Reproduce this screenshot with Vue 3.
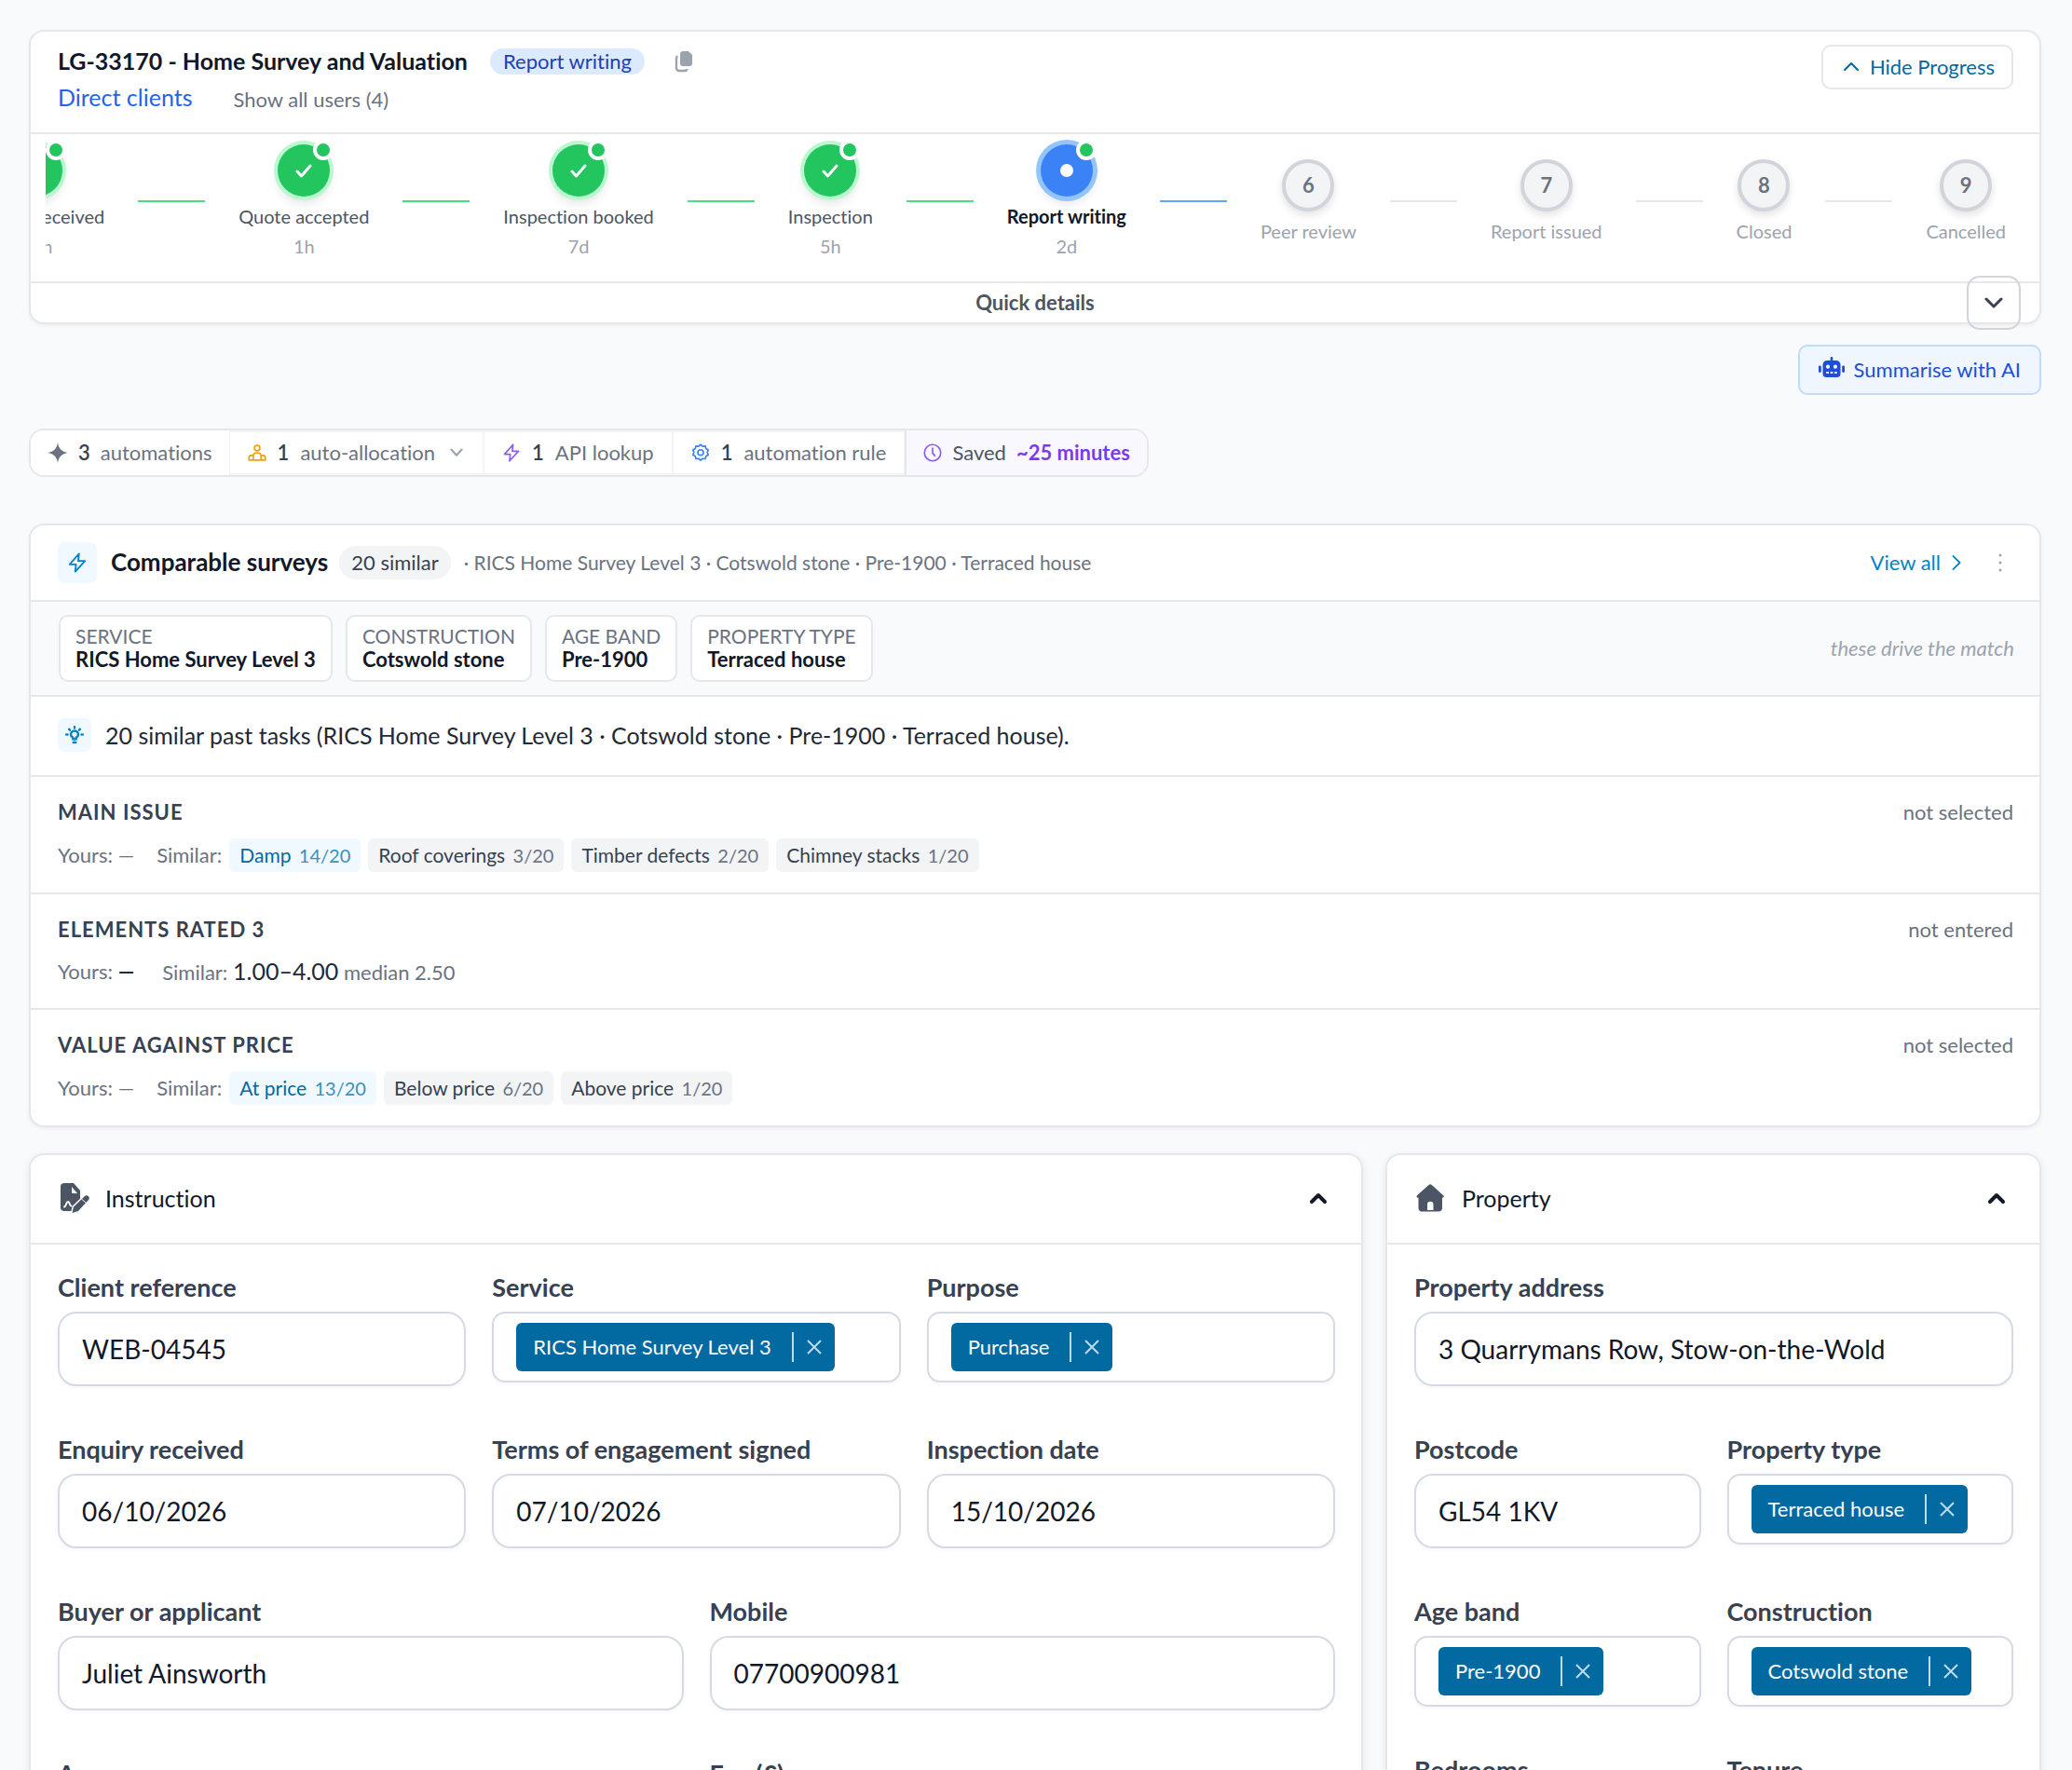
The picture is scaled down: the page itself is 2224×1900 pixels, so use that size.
<script setup>
import { computed, ref } from "vue"

const showProgress = ref(true)

const StepState = Object.freeze({
  Done: "done",
  Current: "current",
  Pending: "pending",
})

const steps = [
  { no: 1, title: "Enquiry received", time: "12h", state: StepState.Done },
  { no: 2, title: "Quote accepted", time: "1h", state: StepState.Done },
  { no: 3, title: "Inspection booked", time: "7d", state: StepState.Done },
  { no: 4, title: "Inspection", time: "5h", state: StepState.Done },
  { no: 5, title: "Report writing", time: "2d", state: StepState.Current },
  { no: 6, title: "Peer review", state: StepState.Pending },
  { no: 7, title: "Report issued", state: StepState.Pending },
  { no: 8, title: "Closed", state: StepState.Pending },
  { no: 9, title: "Cancelled", state: StepState.Pending },
]

const drivers = [
  { label: "Service", value: "RICS Home Survey Level 3" },
  { label: "Construction", value: "Cotswold stone" },
  { label: "Age band", value: "Pre-1900" },
  { label: "Property type", value: "Terraced house" },
]

const matchText = computed(() => drivers.map((d) => d.value).join(" · "))

const mainIssue = [
  { name: "Damp", count: 14 },
  { name: "Roof coverings", count: 3 },
  { name: "Timber defects", count: 2 },
  { name: "Chimney stacks", count: 1 },
]

const valueAgainstPrice = [
  { name: "At price", count: 13 },
  { name: "Below price", count: 6 },
  { name: "Above price", count: 1 },
]

// span = columns out of 6
const panels = ref([
  {
    key: "instruction",
    title: "Instruction",
    fields: [
      { id: "client-ref", label: "Client reference", value: "WEB-04545", span: 2 },
      { id: "service", label: "Service", tag: "RICS Home Survey Level 3", span: 2 },
      { id: "purpose", label: "Purpose", tag: "Purchase", span: 2 },
      { id: "enquiry", label: "Enquiry received", value: "06/10/2026", span: 2 },
      { id: "terms", label: "Terms of engagement signed", value: "07/10/2026", span: 2 },
      { id: "inspection", label: "Inspection date", value: "15/10/2026", span: 2 },
      { id: "buyer", label: "Buyer or applicant", value: "Juliet Ainsworth", span: 3 },
      { id: "mobile", label: "Mobile", value: "07700900981", span: 3 },
      { id: "access", label: "Access", value: "", span: 3 },
      { id: "fee", label: "Fee (£)", value: "", span: 3 },
    ],
  },
  {
    key: "property",
    title: "Property",
    fields: [
      { id: "address", label: "Property address", value: "3 Quarrymans Row, Stow-on-the-Wold", span: 6 },
      { id: "postcode", label: "Postcode", value: "GL54 1KV", span: 3 },
      { id: "ptype", label: "Property type", tag: "Terraced house", span: 3 },
      { id: "age", label: "Age band", tag: "Pre-1900", span: 3 },
      { id: "construction", label: "Construction", tag: "Cotswold stone", span: 3 },
      { id: "bedrooms", label: "Bedrooms", value: "", span: 3 },
      { id: "tenure", label: "Tenure", value: "", span: 3 },
    ],
  },
])
</script>

<template>
  <main class="page">
    <!-- Task header -->
    <section class="card">
      <header class="task-head">
        <div class="task-info">
          <div class="task-row">
            <h1 class="task-title">LG-33170 - Home Survey and Valuation</h1>
            <span class="status">Report writing</span>
            <button type="button" class="plain copy" aria-label="Copy">
              <svg viewBox="0 0 20 24"><path d="M9 1h6l4 4v9a3 3 0 0 1-3 3H9a3 3 0 0 1-3-3V4a3 3 0 0 1 3-3Z" fill="#9ca3af" /><path d="M3.500 6.500A2 2 0 0 0 2 8.500V19a3 3 0 0 0 3 3h6a2.500 2.500 0 0 0 2.500-2" fill="none" stroke="#9ca3af" stroke-width="2.400" /></svg>
            </button>
          </div>
          <div class="task-row links">
            <a href="#" class="client">Direct clients</a>
            <button type="button" class="plain users">Show all users (4)</button>
          </div>
        </div>
        <button type="button" class="hide-btn" @click="showProgress = !showProgress">
          <svg viewBox="0 0 20 20" class="chev"><path d="M3 13l7-7 7 7" /></svg>
          Hide Progress
        </button>
      </header>

      <div v-if="showProgress" class="steps">
        <template v-for="(s, i) in steps" :key="s.no">
          <div class="step" :class="s.state">
            <div class="bubble">
              <svg v-if="s.state === StepState.Done" viewBox="0 0 24 24"><path d="M5 13l4.500 5L19 7" /></svg>
              <span v-else-if="s.state === StepState.Current" class="dot"></span>
              <template v-else>{{ s.no }}</template>
              <span v-if="s.state !== StepState.Pending" class="ping"></span>
            </div>
            <div class="step-title">{{ s.title }}</div>
            <div v-if="s.time" class="step-time">{{ s.time }}</div>
          </div>
          <span v-if="i < steps.length - 1" class="line" :class="s.state"></span>
        </template>
      </div>

      <div class="quick">
        Quick details
        <button type="button" class="quick-btn" aria-label="Expand quick details">
          <svg viewBox="0 0 20 20" class="chev"><path d="M2 6l8 8 8-8" /></svg>
        </button>
      </div>
    </section>

    <div class="ai-row">
      <button type="button" class="ai-btn">
        <svg viewBox="0 0 28 24" class="robot">
          <path fill="currentColor" fill-rule="evenodd" d="M12.700 1.300a1.300 1.300 0 0 1 2.600 0V4H19a4.500 4.500 0 0 1 4.500 4.500V18a4 4 0 0 1-4 4h-11a4 4 0 0 1-4-4V8.500A4.500 4.500 0 0 1 9 4h3.700ZM10 8.600a2.100 2.100 0 1 0 0 4.200 2.100 2.100 0 0 0 0-4.200Zm8 0a2.100 2.100 0 1 0 0 4.200 2.100 2.100 0 0 0 0-4.200ZM8.200 16v2H11v-2Zm4.400 0v2h2.800v-2Zm4.400 0v2h2.800v-2ZM1.400 9.500c.8 0 1.400.5 1.400 1.200v5c0 .7-.6 1.200-1.400 1.200S0 16.400 0 15.700v-5c0-.7.6-1.200 1.400-1.200Zm25.200 0c.8 0 1.400.5 1.400 1.200v5c0 .7-.6 1.200-1.400 1.200s-1.400-.5-1.400-1.200v-5c0-.7.6-1.200 1.400-1.200Z" />
        </svg>
        Summarise with AI
      </button>
    </div>

    <!-- Automation summary -->
    <div class="auto-bar">
      <div class="auto-item first">
        <svg viewBox="0 0 24 24" class="ico star"><path d="M12 0c1 7 4.500 11 12 12-7.500 1-11 5-12 12-1-7-4.500-11-12-12C7.500 11 11 7 12 0Z" /></svg>
        <b>3</b><span>automations</span>
      </div>
      <button type="button" class="auto-item">
        <svg viewBox="0 0 24 24" class="ico amber"><circle cx="12" cy="6" r="3.500" /><path d="M7 21.500v-5.500c0-2.500 2-4 5-4s5 1.500 5 4v5.500M7 15.500H4.500c-2 0-3 1-3 3v3h21v-3c0-2-1-3-3-3H17" /></svg>
        <b>1</b><span>auto-allocation</span>
        <svg viewBox="0 0 20 20" class="chev mini"><path d="M2 5l8 9 8-9" /></svg>
      </button>
      <button type="button" class="auto-item">
        <svg viewBox="0 0 24 24" class="ico violet"><path d="M14 1.500 3 14h7.500L9.500 22.500 21 10h-8Z" /></svg>
        <b>1</b><span>API lookup</span>
      </button>
      <button type="button" class="auto-item">
        <svg viewBox="0 0 24 24" class="ico blue"><path d="M12 1.500l2.600 2.200 3.400-.3.900 3.300 3 1.700-1.300 3.100 1.300 3.200-3 1.700-.9 3.400-3.400-.3-2.600 2.200-2.600-2.200-3.400.3-.9-3.400-3-1.700 1.300-3.200-1.300-3.100 3-1.700.9-3.300 3.400.3Z" /><circle cx="12" cy="11.700" r="3.600" /></svg>
        <b>1</b><span>automation rule</span>
      </button>
      <div class="auto-item saved">
        <svg viewBox="0 0 24 24" class="ico violet"><circle cx="12" cy="12" r="10.500" /><path d="M12 6v6.500l3 3.500" /></svg>
        <span class="saved-text">Saved</span><strong>~25 minutes</strong>
      </div>
    </div>

    <!-- Comparable surveys -->
    <section class="card comparable">
      <header class="comp-head">
        <span class="icon-box">
          <svg viewBox="0 0 24 24" class="ico"><path d="M14 1.500 3 14h7.500L9.500 22.500 21 10h-8Z" /></svg>
        </span>
        <h2 class="comp-title">Comparable surveys</h2>
        <span class="pill">20 similar</span>
        <span class="comp-sub">· {{ matchText }}</span>
        <a href="#" class="view-all">View all
          <svg viewBox="0 0 20 20" class="chev"><path d="M6 2l8 8-8 8" /></svg>
        </a>
        <button type="button" class="plain more" aria-label="More options">
          <svg viewBox="0 0 8 24"><circle cx="4" cy="4" r="1.500" /><circle cx="4" cy="12" r="1.500" /><circle cx="4" cy="20" r="1.500" /></svg>
        </button>
      </header>

      <div class="drivers">
        <div v-for="d in drivers" :key="d.label" class="driver">
          <span class="driver-label">{{ d.label }}</span>
          <span class="driver-value">{{ d.value }}</span>
        </div>
        <em class="drivers-note">these drive the match</em>
      </div>

      <div class="hint">
        <span class="icon-box small">
          <svg viewBox="0 0 24 24" class="ico"><path d="M10 17.500v-2c-2-1-2.800-2.500-2.800-4a4.800 4.800 0 0 1 9.600 0c0 1.500-.8 3-2.800 4v2ZM10.500 21.500h3M12 1.500v1.500M1.500 11.500H3M21 11.500h1.500M5 4.500l1 1M19 4.500l-1 1" /></svg>
        </span>
        20 similar past tasks ({{ matchText }}).
      </div>

      <div class="metric">
        <div class="metric-head"><h3>Main issue</h3><span>not selected</span></div>
        <div class="metric-row">
          <span class="yours">Yours: —</span>
          <span>Similar:</span>
          <span v-for="(t, i) in mainIssue" :key="t.name" class="chip" :class="{ top: i === 0 }">
            {{ t.name }} <small>{{ t.count }}/20</small>
          </span>
        </div>
      </div>

      <div class="metric">
        <div class="metric-head"><h3>Elements rated 3</h3><span>not entered</span></div>
        <div class="metric-row numeric">
          <span class="yours">Yours: <b>—</b></span>
          <span>Similar: <span class="range">1.00–4.00</span> median 2.50</span>
        </div>
      </div>

      <div class="metric">
        <div class="metric-head"><h3>Value against price</h3><span>not selected</span></div>
        <div class="metric-row">
          <span class="yours">Yours: —</span>
          <span>Similar:</span>
          <span v-for="(t, i) in valueAgainstPrice" :key="t.name" class="chip" :class="{ top: i === 0 }">
            {{ t.name }} <small>{{ t.count }}/20</small>
          </span>
        </div>
      </div>
    </section>

    <!-- Form panels -->
    <div class="panels">
      <section v-for="p in panels" :key="p.key" class="card panel" :class="p.key">
        <header class="panel-head">
          <svg v-if="p.key === 'instruction'" viewBox="0 0 36 32" class="panel-icon">
            <path d="M7 0h10l7 8v20a2 2 0 0 1-2 2H7a4 4 0 0 1-4-4V4a4 4 0 0 1 4-4Z" />
            <path d="M15 4v7h6Z" class="cut" />
            <path d="M7 25.500c2 0 2-5.500 4-5.500s1.500 4.500 3.500 4.500" class="sign" />
            <path d="M29.500 13.500a3 3 0 0 1 4 4L22 30l-6.500 2 1.500-6.500Z" class="pen" />
            <path d="M25.500 17l5 4.500" class="pen-gap" />
          </svg>
          <svg v-else viewBox="0 0 36 32" class="panel-icon">
            <path fill-rule="evenodd" d="M15.500 2a2.500 2.500 0 0 1 3.300 0L31 13c1.500 1.500.8 2.700-1 2.700V26.500a4 4 0 0 1-4 4H8.500a4 4 0 0 1-4-4V15.700c-1.800 0-2.700-1.200-1.200-2.700ZM14 29h6.500v-6a3.200 3.200 0 0 0-6.500 0Z" />
          </svg>
          <h2>{{ p.title }}</h2>
          <button type="button" class="plain panel-toggle" :aria-label="`Collapse ${p.title}`">
            <svg viewBox="0 0 20 20" class="chev"><path d="M3 14l7-7 7 7" /></svg>
          </button>
        </header>
        <div class="fields">
          <div v-for="f in p.fields" :key="f.id" class="field" :class="`span-${f.span}`">
            <label :for="f.id">{{ f.label }}</label>
            <div v-if="f.tag !== undefined" class="tag-box">
              <span v-if="f.tag" class="tag">
                {{ f.tag }}
                <button type="button" :aria-label="`Remove ${f.tag}`" @click="f.tag = ''">
                  <svg viewBox="0 0 16 16"><path d="M1 1l14 14M15 1 1 15" /></svg>
                </button>
              </span>
              <input :id="f.id" type="text" />
            </div>
            <input v-else :id="f.id" v-model="f.value" type="text" class="text-box" />
          </div>
        </div>
      </section>
    </div>
  </main>
</template>

<style>
body {
  background: #f9fafc;
}
</style>

<style scoped>
* {
  box-sizing: border-box;
}

.page {
  height: 100vh;
  overflow-y: auto;
  scrollbar-width: none;
  padding: 32px 33px 32px 31px;
  font-family: Lato, "Liberation Sans", sans-serif;
  font-size: 22px;
  line-height: 28px;
  font-variant-ligatures: none;
  color: #6b7280;
}

h1, h2, h3 {
  margin: 0;
}

button, input {
  font: inherit;
  font-variant-ligatures: none;
}

button {
  cursor: pointer;
}

svg {
  display: block;
  flex: none;
}

.plain {
  border: none;
  background: transparent;
  padding: 0;
  color: inherit;
}

.card {
  background: #fff;
  border: 2px solid #e5e7eb;
  border-radius: 16px;
  box-shadow: 0 2px 4px rgba(0, 0, 0, 0.05);
}

.chev {
  width: 20px;
  height: 20px;
  fill: none;
  stroke: currentColor;
  stroke-width: 2;
  stroke-linecap: round;
  stroke-linejoin: round;
}

.ico {
  width: 20px;
  height: 20px;
  fill: none;
  stroke: currentColor;
  stroke-width: 2;
  stroke-linejoin: round;
  stroke-linecap: round;
}

/* ============ Task header ============ */
.task-head {
  display: flex;
  justify-content: space-between;
  align-items: flex-start;
  height: 110px;
  padding: 14px 28px 0 29px;
  border-bottom: 2px solid #e5e7eb;
}

.task-row {
  display: flex;
  align-items: center;
  gap: 24px;
  height: 36px;
}

.task-row.links {
  gap: 44px;
  margin-top: 2px;
}

.task-title {
  padding-bottom: 2px;
  font-size: 25px;
  font-weight: 700;
  color: #111827;
}

.status {
  padding: 0 14px;
  border-radius: 14px;
  background: #dbeafe;
  color: #1e40af;
}

.copy {
  margin-left: 8px;
}

.copy svg {
  width: 20px;
  height: 24px;
}

.client {
  font-size: 25px;
  color: #2563eb;
  text-decoration: none;
}

.users {
  padding-top: 6px;
}

.hide-btn {
  display: flex;
  align-items: center;
  gap: 10px;
  height: 48px;
  padding: 0 18px 0 20px;
  border: 2px solid #e5e7eb;
  border-radius: 10px;
  background: #fff;
  color: #0369a1;
}

/* ============ Steps ============ */
.steps {
  display: flex;
  justify-content: flex-end;
  align-items: center;
  gap: 36px;
  min-height: 158px;
  margin: 0 16px;
  padding: 10px 20px 24px 0;
  overflow: hidden;
}

.step {
  flex: none;
  display: flex;
  flex-direction: column;
  align-items: center;
  font-size: 20px;
  line-height: 26px;
}

.bubble {
  position: relative;
  display: flex;
  align-items: center;
  justify-content: center;
  width: 56px;
  height: 56px;
  border-radius: 50%;
  font-size: 22px;
  font-weight: 700;
}

.bubble svg {
  width: 24px;
  height: 24px;
  fill: none;
  stroke: #fff;
  stroke-width: 3;
  stroke-linecap: round;
  stroke-linejoin: round;
}

.done .bubble {
  background: #22c55e;
  box-shadow: 0 0 0 4px #bbf7d0, 0 8px 12px rgba(0, 0, 0, 0.1);
}

.current .bubble {
  background: #3b82f6;
  box-shadow: 0 0 0 5px #93c5fd, 0 8px 12px rgba(0, 0, 0, 0.1);
}

.pending .bubble {
  background: #f3f4f6;
  border: 4px solid #d1d5db;
  color: #6b7280;
  box-shadow: 0 4px 8px rgba(0, 0, 0, 0.12);
}

.dot {
  width: 14px;
  height: 14px;
  border-radius: 50%;
  background: #fff;
}

.ping {
  position: absolute;
  top: -5px;
  right: -4px;
  width: 22px;
  height: 22px;
  border: 4px solid #fff;
  border-radius: 50%;
  background: #22c55e;
}

.step-title {
  margin-top: 8px;
  color: #4b5563;
}

.current .step-title {
  font-weight: 700;
  color: #111827;
}

.pending .step-title {
  color: #9ca3af;
}

.step-time {
  margin-top: 6px;
  color: #9ca3af;
}

.line {
  flex: none;
  width: 72px;
  height: 2px;
  background: #e5e7eb;
}

.line.done {
  background: #4ade80;
}

.line.current {
  background: #60a5fa;
}

.quick {
  position: relative;
  height: 44px;
  border-top: 2px solid #e5e7eb;
  text-align: center;
  line-height: 42px;
  font-weight: 700;
  color: #4b5563;
}

.quick-btn {
  position: absolute;
  right: 20px;
  top: -8px;
  display: flex;
  align-items: center;
  justify-content: center;
  width: 58px;
  height: 58px;
  border: 2px solid #d1d5db;
  border-radius: 14px;
  background: transparent;
  color: #374151;
}

.quick-btn .chev {
  stroke-width: 3;
}

/* ============ AI + automations ============ */
.ai-row {
  display: flex;
  justify-content: flex-end;
  margin: 22px 0 36px;
}

.ai-btn {
  display: flex;
  align-items: center;
  gap: 10px;
  height: 54px;
  padding: 0 20px;
  border: 2px solid #bfdbfe;
  border-radius: 10px;
  background: #eff6ff;
  color: #1d4ed8;
}

.robot {
  width: 28px;
  height: 24px;
  margin-bottom: 4px;
}

.auto-bar {
  display: flex;
  width: fit-content;
  height: 52px;
  margin-bottom: 50px;
  border: 2px solid #e5e7eb;
  border-radius: 16px;
  background: #fff;
  overflow: hidden;
}

.auto-item {
  display: flex;
  align-items: center;
  gap: 12px;
  padding: 0 19px;
  border: 2px solid #f3f4f6;
  border-left-width: 1px;
  border-right-width: 1px;
  background: #fff;
  color: #6b7280;
  white-space: nowrap;
}

.auto-item.first {
  gap: 11px;
  padding: 0 18px;
  border: none;
}

.auto-item b {
  font-weight: 600;
  color: #374151;
}

.auto-item.saved {
  gap: 11px;
  border: none;
  border-left: 2px solid #e5e7eb;
  padding: 0 18px;
  background: #faf8ff;
}

.star {
  fill: #6b7280;
  stroke: none;
  width: 22px;
  height: 22px;
}

.amber {
  color: #f59e0b;
}

.violet {
  color: #8b5cf6;
}

.blue {
  color: #3b82f6;
}

.mini {
  width: 14px;
  height: 14px;
  margin: 0 2px 0 4px;
  stroke-width: 3;
  color: #9ca3af;
}

.saved-text {
  color: #4b5563;
}

.saved strong {
  color: #7c3aed;
}

/* ============ Comparable ============ */
.comp-head {
  display: flex;
  align-items: center;
  height: 80px;
  padding: 0 28px 0 29px;
}

.icon-box {
  display: flex;
  align-items: center;
  justify-content: center;
  width: 42px;
  height: 44px;
  border-radius: 8px;
  background: #f0f9ff;
  color: #0284c7;
}

.icon-box .ico {
  width: 22px;
  height: 22px;
}

.icon-box.small {
  width: 36px;
  height: 36px;
  margin-right: 15px;
}

.icon-box.small .ico {
  width: 20px;
  height: 20px;
  stroke-width: 3;
}

.comp-title {
  margin-left: 15px;
  padding-bottom: 2px;
  font-size: 26px;
  font-weight: 700;
  color: #111827;
}

.pill {
  margin: 0 14px 0 12px;
  padding: 4px 13px;
  border-radius: 18px;
  background: #f3f4f6;
  color: #374151;
}

.comp-sub {
  font-size: 21px;
}

.view-all {
  display: flex;
  align-items: center;
  gap: 8px;
  margin-left: auto;
  color: #0284c7;
  text-decoration: none;
}

.view-all .chev {
  width: 18px;
  height: 18px;
}

.more {
  margin-left: 24px;
  padding: 0 10px;
}

.more svg {
  width: 8px;
  height: 24px;
  fill: #9ca3af;
}

.drivers {
  display: flex;
  align-items: center;
  gap: 14px;
  padding: 14px 27px 14px 30px;
  border-top: 2px solid #e5e7eb;
  border-bottom: 2px solid #e5e7eb;
  background: #f9fafb;
}

.driver {
  display: flex;
  flex-direction: column;
  padding: 8px 16px 10px;
  border: 2px solid #e5e7eb;
  border-radius: 10px;
  background: #fff;
  font-size: 21px;
  line-height: 25px;
}

.driver-label {
  text-transform: uppercase;
}

.driver-value {
  font-size: 22px;
  font-weight: 700;
  color: #111827;
}

.drivers-note {
  margin-left: auto;
  color: #9ca3af;
}

.hint {
  display: flex;
  align-items: center;
  height: 84px;
  padding: 0 29px 2px;
  font-size: 25px;
  color: #1f2937;
}

.metric {
  padding: 23px 28px 22px 29px;
  border-top: 2px solid #e5e7eb;
}

.metric-head {
  display: flex;
  justify-content: space-between;
  align-items: center;
  line-height: 30px;
}

.metric-head h3 {
  font-size: 22px;
  font-weight: 700;
  letter-spacing: 1px;
  text-transform: uppercase;
  color: #374151;
}

.metric-row {
  display: flex;
  align-items: center;
  gap: 8px;
  min-height: 36px;
  margin-top: 13px;
}

.metric-row.numeric {
  min-height: 34px;
}

.yours {
  margin-right: 16px;
}

.numeric .yours {
  margin-right: 22px;
}

.numeric b {
  color: #1f2937;
}

.range {
  font-size: 25px;
  color: #1f2937;
}

.chip {
  padding: 4px 11px;
  border-radius: 6px;
  background: #f3f4f6;
  color: #374151;
  font-size: 21px;
}

.chip small {
  margin-left: 3px;
  font-size: 20px;
  color: #6b7280;
}

.chip.top {
  background: #f0f9ff;
  color: #0369a1;
}

.chip.top small {
  color: #3a8fc0;
}

/* ============ Panels ============ */
.panels {
  display: grid;
  grid-template-columns: repeat(12, minmax(0, 1fr));
  gap: 24px;
  margin-top: 28px;
}

.panel {
  grid-column: span 4;
  box-shadow: 0 2px 8px rgba(0, 0, 0, 0.08);
}

.panel.instruction {
  grid-column: span 8;
}

.panel-head {
  display: flex;
  align-items: center;
  gap: 15px;
  height: 96px;
  padding: 0 36px 2px 29px;
  border-bottom: 2px solid #e5e7eb;
}

.panel-head h2 {
  font-size: 25px;
  font-weight: 400;
  color: #111827;
}

.panel-icon {
  width: 36px;
  height: 32px;
  fill: #4b5563;
}

.panel-icon .cut {
  fill: #fff;
}

.panel-icon .sign {
  fill: none;
  stroke: #fff;
  stroke-width: 2;
  stroke-linecap: round;
}

.panel-icon .pen {
  stroke: #fff;
  stroke-width: 3;
  paint-order: stroke;
}

.panel-icon .pen-gap {
  stroke: #fff;
  stroke-width: 1;
}

.panel-toggle {
  margin-left: auto;
  color: #111827;
}

.panel-toggle .chev {
  stroke-width: 4;
}

.fields {
  display: grid;
  grid-template-columns: repeat(6, minmax(0, 1fr));
  gap: 50px 28px;
  padding: 28px 28px 40px 29px;
}

.span-2 {
  grid-column: span 2;
}

.span-3 {
  grid-column: span 3;
}

.span-6 {
  grid-column: span 6;
}

.field label {
  display: block;
  margin-bottom: 8px;
  font-size: 27px;
  line-height: 36px;
  font-weight: 700;
  color: #374151;
}

.text-box {
  display: block;
  width: 100%;
  height: 80px;
  padding: 0 24px;
  border: 2px solid #d6dae4;
  border-radius: 20px;
  background: #fff;
  box-shadow: 0 2px 4px rgba(0, 0, 0, 0.04);
  font-size: 28px;
  color: #111827;
}

.tag-box {
  display: flex;
  align-items: center;
  height: 76px;
  padding: 0 24px;
  border: 2px solid #d6dae4;
  border-radius: 14px;
  box-shadow: 0 2px 4px rgba(0, 0, 0, 0.04);
}

.tag-box input {
  flex: 1;
  width: 0;
  min-width: 0;
  border: none;
  outline: none;
  background: transparent;
}

.tag {
  flex: none;
  display: flex;
  align-items: center;
  gap: 22px;
  height: 52px;
  padding: 0 14px 0 18px;
  border-radius: 6px;
  background: #0369a1;
  color: #fff;
}

.tag button {
  height: 32px;
  padding: 0 0 0 14px;
  border: none;
  border-left: 2px solid #bfdcec;
  background: transparent;
}

.tag svg {
  width: 16px;
  height: 16px;
  stroke: #bfdcec;
  stroke-width: 2;
}
</style>
